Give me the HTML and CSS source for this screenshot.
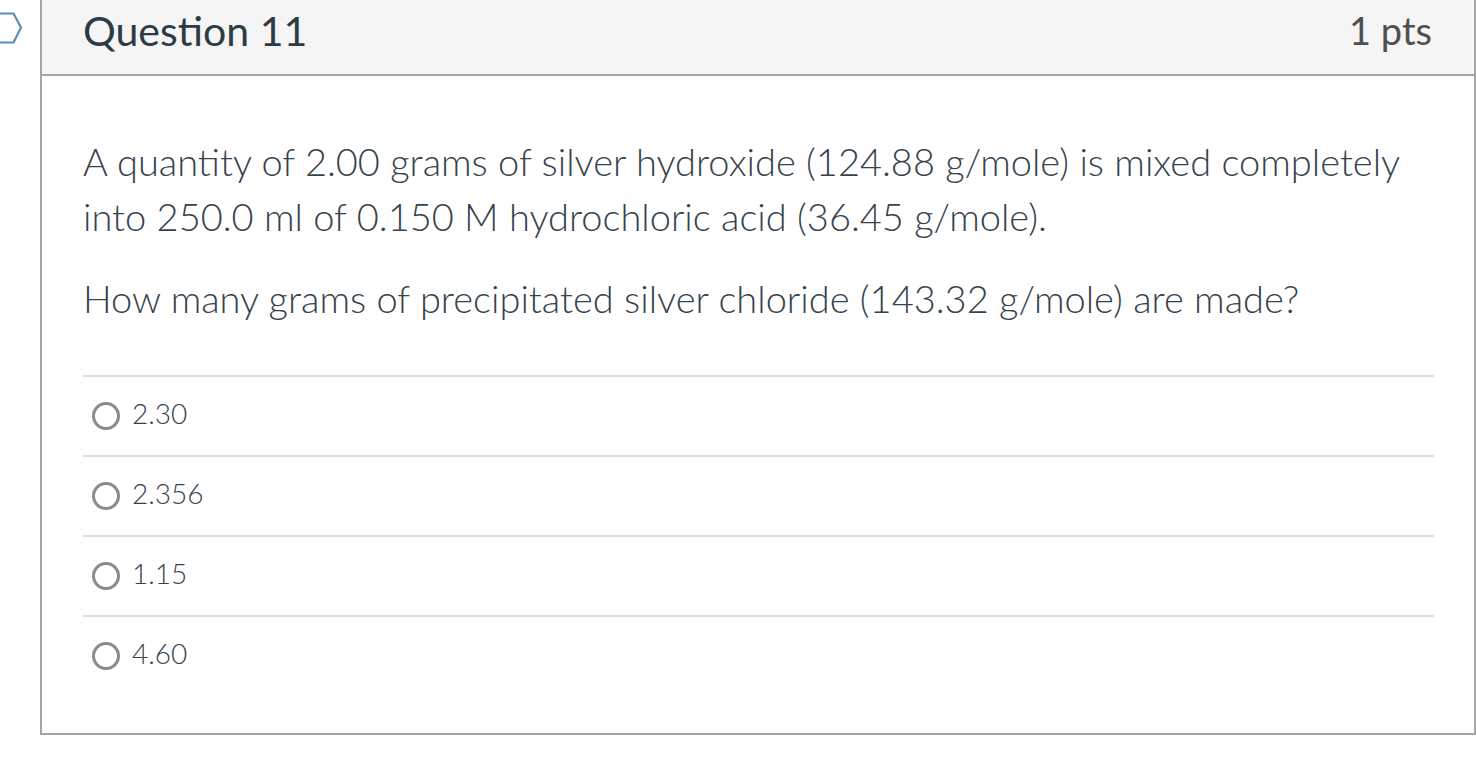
FILE: index.html
```html
<!DOCTYPE html>
<html>
<head>
<meta charset="utf-8">
<link rel="stylesheet" href="styles.css">
</head>
<body>
<div class="page">
  <div class="flag">
    <svg width="30" height="56" viewBox="0 0 30 56"><path d="M-4 13.5 H13.5 L21 27.5 L13.5 42.5 H-4" fill="none" stroke="#5f8db3" stroke-width="2.2" stroke-linejoin="round"/></svg>
  </div>
  <div class="card">
    <div class="header">
      <span class="title">Question 11</span>
      <span class="pts">1 pts</span>
    </div>
    <div class="content">
      <div class="question">
        <p>A quantity of 2.00 grams of silver hydroxide (124.88 g/mole) is mixed completely into 250.0 ml of 0.150 M hydrochloric acid (36.45 g/mole).</p>
        <p>How many grams of precipitated silver chloride (143.32 g/mole) are made?</p>
      </div>
      <div class="answers">
        <div class="answer"><span class="radio"></span><span class="label">2.30</span></div>
        <div class="answer"><span class="radio"></span><span class="label">2.356</span></div>
        <div class="answer"><span class="radio"></span><span class="label">1.15</span></div>
        <div class="answer"><span class="radio"></span><span class="label">4.60</span></div>
      </div>
    </div>
  </div>
</div>
</body>
</html>
```
FILE: styles.css
```css
html, body {
  margin: 0;
  padding: 0;
  background: #fff;
}
body {
  font-family: Lato, "Noto Sans", sans-serif;
  color: #2d3b45;
}
.page {
  display: flex;
  width: 1476px;
  height: 774px;
  overflow: hidden;
}
.flag {
  width: 40px;
  flex: none;
}
.flag svg {
  display: block;
}
.card {
  width: 1432px;
  height: 733px;
  border-left: 2px solid #a5a5a5;
  border-right: 2px solid #a5a5a5;
  border-bottom: 2px solid #a5a5a5;
  display: flex;
  flex-direction: column;
}
.header {
  height: 76px;
  background: #f5f5f5;
  border-bottom: 2px solid #a5a5a5;
  display: flex;
  align-items: center;
  justify-content: space-between;
  padding: 0 42px 0 41px;
  box-sizing: border-box;
}
.title {
  font-size: 41px;
  font-weight: 400;
  color: #2d3b45;
  margin-top: -14px;
}
.pts {
  font-size: 38px;
  font-weight: 400;
  color: #4f4f4f;
  margin-top: -14px;
}
.content {
  padding: 0 40px 0 41px;
}
.question {
  padding-top: 58px;
}
.question p {
  margin: 0 0 27px 0;
  font-family: "Lato Light", Lato, "Noto Sans", sans-serif;
  font-size: 38px;
  font-weight: 300;
  line-height: 55px;
  color: #35434d;
}
.answers {
  margin-top: 49px;
}
.answer {
  border-top: 2px solid #ddd;
  height: 78px;
  display: flex;
  align-items: center;
  padding-left: 9px;
}
.radio {
  width: 22px;
  height: 22px;
  border: 3px solid #8a8a8a;
  border-radius: 50%;
  flex: none;
}
.label {
  font-family: "Lato Light", Lato, "Noto Sans", sans-serif;
  font-size: 28px;
  font-weight: 300;
  margin-left: 12px;
  margin-top: -6px;
  color: #35434d;
}
```
